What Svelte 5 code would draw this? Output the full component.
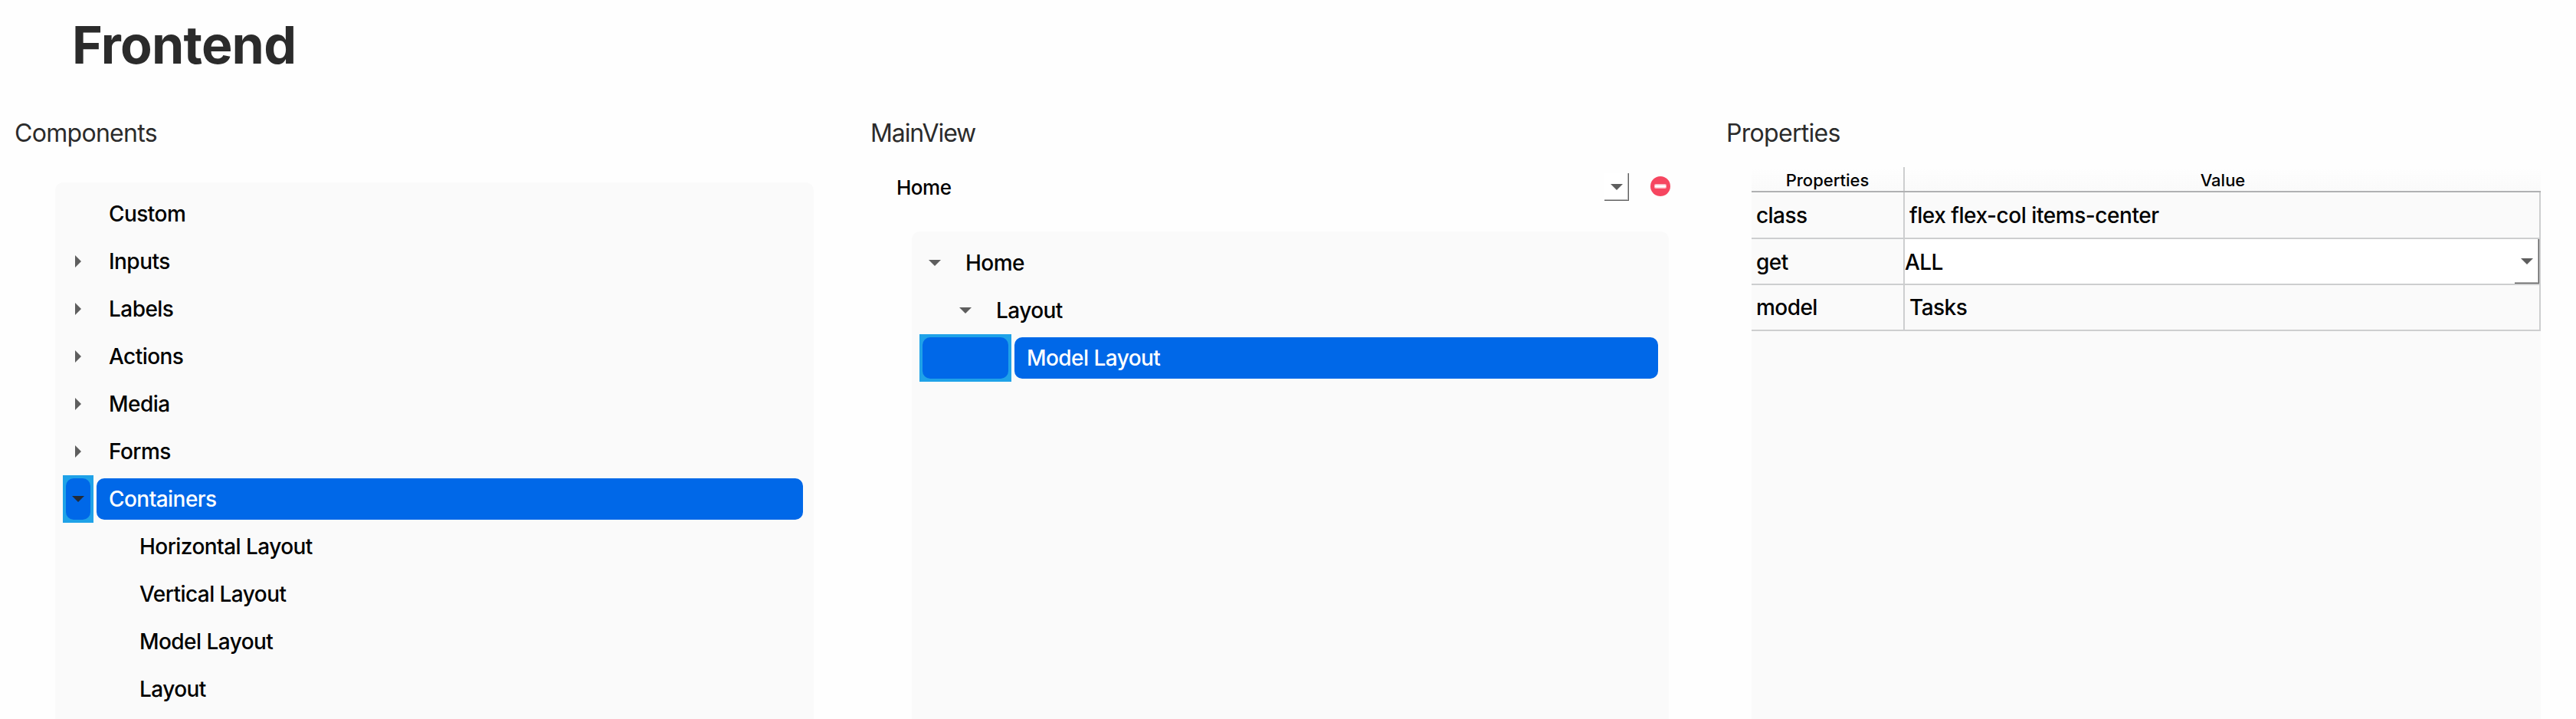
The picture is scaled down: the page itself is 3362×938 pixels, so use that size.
<script>
  const components = [
    { name: 'Custom', level: 0 },
    { name: 'Inputs', level: 0, arrow: 'right' },
    { name: 'Labels', level: 0, arrow: 'right' },
    { name: 'Actions', level: 0, arrow: 'right' },
    { name: 'Media', level: 0, arrow: 'right' },
    { name: 'Forms', level: 0, arrow: 'right' },
    { name: 'Containers', level: 0, arrow: 'down', selected: true },
    { name: 'Horizontal Layout', level: 1 },
    { name: 'Vertical Layout', level: 1 },
    { name: 'Model Layout', level: 1 },
    { name: 'Layout', level: 1 }
  ];
  const view = [
    { name: 'Home', level: 0, arrow: 'down' },
    { name: 'Layout', level: 1, arrow: 'down' },
    { name: 'Model Layout', level: 2, selected: true }
  ];
</script>

{#snippet arrow(dir)}
  {#if dir === 'right'}
    <svg class="tri" width="8" height="16" viewBox="0 0 8 16"><path d="M0 0L8 8L0 16Z" fill="currentColor" /></svg>
  {:else if dir === 'down'}
    <svg class="tri" width="16" height="8" viewBox="0 0 16 8"><path d="M0 0H16L8 8Z" fill="currentColor" /></svg>
  {/if}
{/snippet}

{#snippet tree(items)}
  {#each items as item}
    <div class="row" class:selected={item.selected}>
      <div class="branch" style:width="{(item.level + 1) * 40}px">
        <div class="fill">{@render arrow(item.arrow)}</div>
      </div>
      <div class="item"><span>{item.name}</span></div>
    </div>
  {/each}
{/snippet}

<main>
  <h1>Frontend</h1>
  <div class="columns">
    <section>
      <h2>Components</h2>
      <div class="panel left">{@render tree(components)}</div>
    </section>

    <section>
      <h2 class="view-title">MainView</h2>
      <div class="picker">
        <span class="current">Home</span>
        <button class="drop" aria-label="Choose view">{@render arrow('down')}</button>
        <svg class="remove" width="26" height="26" viewBox="0 0 26 26">
          <circle cx="13" cy="13" r="13" fill="#f64660" />
          <rect x="5" y="10" width="16" height="6" rx="2" fill="#fbb5c0" />
          <rect x="6" y="11.5" width="14" height="3" rx="1" fill="#fff" />
        </svg>
      </div>
      <div class="panel middle">{@render tree(view)}</div>
    </section>

    <section>
      <h2 class="props-title">Properties</h2>
      <div class="table">
        <div class="line head"><div class="key"><span>Properties</span></div><div class="value"><span>Value</span></div></div>
        <div class="line"><div class="key"><span>class</span></div><div class="value"><span>flex flex-col items-center</span></div></div>
        <div class="line">
          <div class="key"><span>get</span></div>
          <div class="value combo"><span>ALL</span><button class="drop tall" aria-label="Choose get">{@render arrow('down')}</button></div>
        </div>
        <div class="line"><div class="key"><span>model</span></div><div class="value"><span>Tasks</span></div></div>
      </div>
    </section>
  </div>
</main>

<style>
  :global(body) { background: #fff; }
  main {
    box-sizing: border-box;
    display: flex;
    flex-direction: column;
    width: 3362px;
    height: 938px;
    overflow: hidden;
    background: #fefefe;
    font-family: Inter, sans-serif;
    font-size: 28px;
    font-weight: 450;
    letter-spacing: -0.55px;
    color: #000;
  }
  h1 {
    margin: 0;
    padding: 18px 0 0 94px;
    font-size: 68px;
    line-height: 80px;
    font-weight: 700;
    letter-spacing: -0.8px;
    color: #2b2b2b;
  }
  .columns {
    flex: 1;
    display: grid;
    grid-template-columns: 1117px 1117px 1128px;
    padding-top: 54px;
    min-height: 0;
  }
  section { display: flex; flex-direction: column; min-height: 0; }
  h2 {
    margin: 0;
    padding-left: 19px;
    font-size: 32px;
    line-height: 44px;
    font-weight: 400;
    letter-spacing: -0.7px;
    color: #2b2b2b;
  }
  .view-title { letter-spacing: -1.1px; }
  .panel {
    flex: 1;
    box-sizing: border-box;
    padding: 10px 14px 0 10px;
    background: #fafafa;
    border-radius: 10px 10px 0 0;
  }
  .left { margin: 42px 55px 0 72px; }
  .middle { margin: 40px 56px 0 73px; }
  .row { display: flex; height: 62px; gap: 4px; }
  .branch {
    flex: none;
    box-sizing: border-box;
    padding: 4px;
    color: #5e5e5e;
  }
  .fill {
    height: 54px;
    display: flex;
    align-items: center;
    justify-content: flex-end;
    border-radius: 10px;
    padding-right: 8px;
  }
  .fill :global(svg[width='8']) { margin-right: 4px; }
  .item {
    flex: 1;
    margin: 4px 0;
    padding-left: 16px;
    line-height: 54px;
    border-radius: 10px;
    white-space: nowrap;
  }
  .selected .branch { background: #1fa2e8; color: #222b38; }
  .selected .fill, .selected .item { background: #0068e8; }
  .selected .item { color: #fff; }
  .tri { display: block; flex: none; }
  .picker {
    display: flex;
    align-items: center;
    height: 36px;
    margin-top: 30px;
    padding: 0 54px 0 53px;
  }
  .current { flex: 1; padding-top: 2px; font-size: 26px; line-height: 34px; letter-spacing: -0.5px; }
  .drop {
    box-sizing: border-box;
    width: 32px;
    height: 36px;
    padding: 0;
    display: flex;
    align-items: center;
    justify-content: center;
    border: 0 solid #5f5f5f;
    border-width: 0 1px 1px 0;
    background: #fff;
    box-shadow: inset -1px -1px #b4b4b4;
    color: #5e5e5e;
  }
  .remove { margin: -2px 0 0 28px; }
  .table {
    flex: 1;
    margin: 22px 46px 0 52px;
    background: #fafafa;
  }
  .line { display: flex; height: 60px; box-sizing: border-box; border-bottom: 2px solid #cdcecf; }
  .key, .value { box-sizing: border-box; border-right: 2px solid #cdcecf; line-height: 60px; white-space: nowrap; }
  .line:nth-child(2) { height: 61px; }
  .line:last-child .key, .line:last-child .value { line-height: 59px; }
  .key { width: 200px; padding-left: 6px; }
  .value { flex: 1; padding-left: 6px; }
  .line:nth-child(2) .value { letter-spacing: -0.45px; }
  .head {
    height: 33px;
    border-bottom-color: #b0b1b2;
    background: linear-gradient(#fefefe, #fafafa);
    font-size: 22px;
    letter-spacing: 0;
    text-align: center;
  }
  .head .key, .head .value { padding: 0; line-height: 34px; }
  .head .value { padding-left: 2px; border-right-color: transparent; }
  .combo { display: flex; padding-left: 0; background: #fff; }
  .combo span { flex: 1; }
  .tall { height: 58px; }
</style>
